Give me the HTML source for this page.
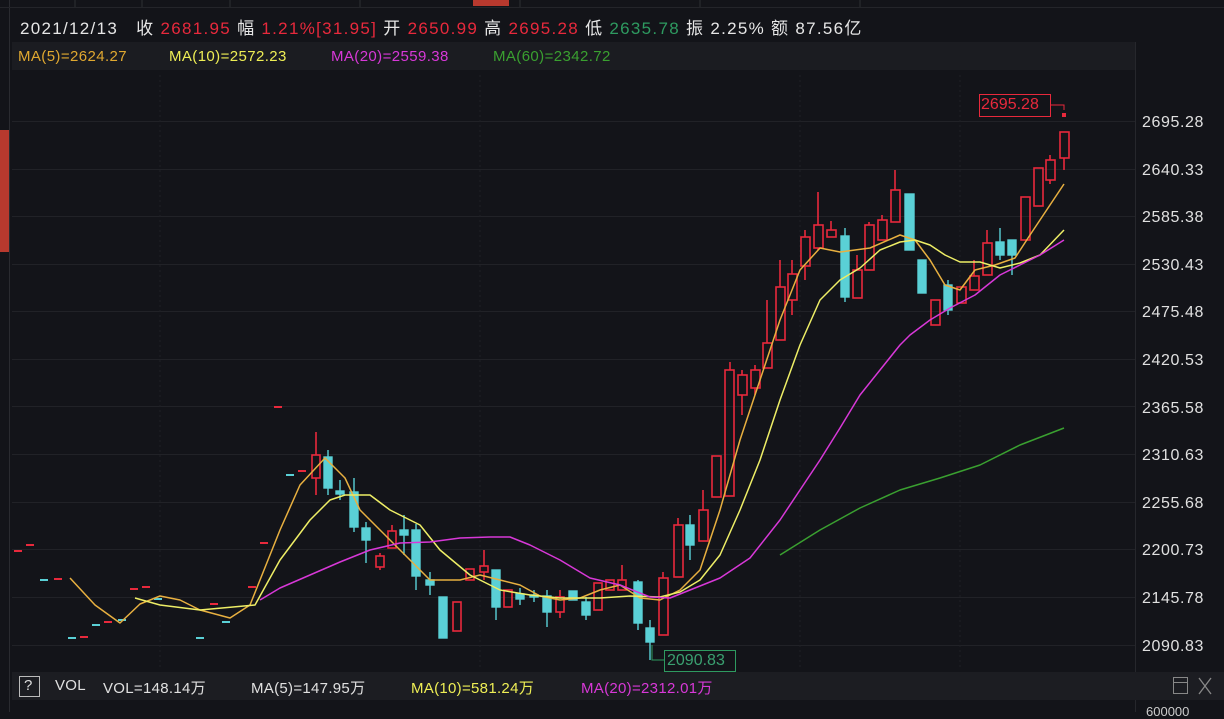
<!DOCTYPE html>
<html><head><meta charset="utf-8"><style>
html,body{margin:0;padding:0;background:#131419;width:1224px;height:712px;overflow:hidden;font-family:"Liberation Sans","Noto Sans CJK SC",sans-serif}
.t{position:absolute;white-space:nowrap}
.m{position:absolute;white-space:nowrap;top:48px;font-size:15px;letter-spacing:0.4px}
.v{position:absolute;white-space:nowrap;top:677px;font-size:15px;letter-spacing:0.3px;color:#e0e0e0}
</style></head><body>
<svg width="1224" height="712" style="position:absolute;left:0;top:0">
<rect x="0" y="0" width="1224" height="712" fill="#131419"/>
<line x1="9.5" y1="0" x2="9.5" y2="712" stroke="#2a2b30"/>
<rect x="0" y="130" width="9" height="122" fill="#b8392e"/>
<line x1="0" y1="7.5" x2="1224" y2="7.5" stroke="#24252a"/>
<g stroke="#2e2f34"><line x1="75" y1="0" x2="75" y2="7"/><line x1="142" y1="0" x2="142" y2="7"/><line x1="230" y1="0" x2="230" y2="7"/><line x1="360" y1="0" x2="360" y2="7"/><line x1="520" y1="0" x2="520" y2="7"/><line x1="700" y1="0" x2="700" y2="7"/><line x1="860" y1="0" x2="860" y2="7"/></g>
<rect x="473" y="0" width="36" height="6" fill="#b8392e"/>
<rect x="12" y="42" width="1123" height="28" fill="#1b1c21"/>
<line x1="1135.5" y1="42" x2="1135.5" y2="712" stroke="#26272c"/>
<g stroke="#212227" stroke-width="1">
<line x1="12" y1="121.5" x2="1135" y2="121.5"/><line x1="12" y1="169.5" x2="1135" y2="169.5"/><line x1="12" y1="216.5" x2="1135" y2="216.5"/><line x1="12" y1="264.5" x2="1135" y2="264.5"/><line x1="12" y1="311.5" x2="1135" y2="311.5"/><line x1="12" y1="359.5" x2="1135" y2="359.5"/><line x1="12" y1="406.5" x2="1135" y2="406.5"/><line x1="12" y1="454.5" x2="1135" y2="454.5"/><line x1="12" y1="502.5" x2="1135" y2="502.5"/><line x1="12" y1="549.5" x2="1135" y2="549.5"/><line x1="12" y1="597.5" x2="1135" y2="597.5"/><line x1="12" y1="645.5" x2="1135" y2="645.5"/>
</g>
<g stroke="#1f2025" stroke-dasharray="2,3"><line x1="160" y1="75" x2="160" y2="668"/><line x1="480" y1="75" x2="480" y2="668"/><line x1="800" y1="75" x2="800" y2="668"/><line x1="960" y1="75" x2="960" y2="668"/></g>
<g stroke-width="2">
<line x1="14" y1="551" x2="22" y2="551" stroke="#e8293c"/><line x1="26" y1="545" x2="34" y2="545" stroke="#e8293c"/>
<line x1="40" y1="580" x2="48" y2="580" stroke="#5ad0d6"/><line x1="54" y1="579" x2="62" y2="579" stroke="#e8293c"/>
<line x1="68" y1="638" x2="76" y2="638" stroke="#5ad0d6"/><line x1="80" y1="637" x2="88" y2="637" stroke="#e8293c"/>
<line x1="92" y1="625" x2="100" y2="625" stroke="#5ad0d6"/><line x1="104" y1="622" x2="112" y2="622" stroke="#e8293c"/>
<line x1="118" y1="620" x2="126" y2="620" stroke="#5ad0d6"/><line x1="130" y1="589" x2="138" y2="589" stroke="#e8293c"/>
<line x1="142" y1="587" x2="150" y2="587" stroke="#e8293c"/><line x1="154" y1="599" x2="162" y2="599" stroke="#5ad0d6"/>
<line x1="196" y1="638" x2="204" y2="638" stroke="#5ad0d6"/><line x1="210" y1="604" x2="218" y2="604" stroke="#e8293c"/>
<line x1="222" y1="622" x2="230" y2="622" stroke="#5ad0d6"/><line x1="248" y1="587" x2="256" y2="587" stroke="#e8293c"/>
<line x1="260" y1="543" x2="268" y2="543" stroke="#e8293c"/><line x1="274" y1="407" x2="282" y2="407" stroke="#e8293c"/>
<line x1="286" y1="475" x2="294" y2="475" stroke="#5ad0d6"/><line x1="298" y1="471" x2="306" y2="471" stroke="#e8293c"/>
</g>
<g stroke="#e8293c" stroke-width="1.6" fill="none">
<path d="M316 432V455M316 478V495"/><rect x="312" y="455" width="8" height="23"/>
<path d="M380 553V556M380 567V570"/><rect x="376" y="556" width="8" height="11"/>
<path d="M392 525V531"/><rect x="388" y="531" width="8" height="17"/>
<rect x="453" y="602" width="8" height="29"/>
<rect x="466" y="569" width="8" height="11"/>
<path d="M484 550V566M484 572V580"/><rect x="480" y="566" width="8" height="6"/>
<rect x="504" y="590" width="8" height="17"/>
<path d="M560 590V597M560 612V618"/><rect x="556" y="597" width="8" height="15"/>
<rect x="594" y="583" width="8" height="27"/>
<rect x="606" y="580" width="8" height="10"/>
<path d="M622 565V580"/><rect x="618" y="580" width="8" height="10"/>
<path d="M663 572V578"/><rect x="659" y="578" width="9" height="57"/>
<path d="M678 518V525"/><rect x="674" y="525" width="9" height="52"/>
<path d="M703 490V510"/><rect x="699" y="510" width="9" height="31"/>
<rect x="712" y="456" width="9" height="41"/>
<path d="M730 362V370"/><rect x="725" y="370" width="9" height="126"/>
<path d="M742 370V375M742 395V415"/><rect x="738" y="375" width="9" height="20"/>
<path d="M755 365V370M755 388V395"/><rect x="751" y="370" width="9" height="18"/>
<path d="M767 300V343"/><rect x="763" y="343" width="9" height="25"/>
<path d="M780 260V287"/><rect x="776" y="287" width="9" height="53"/>
<path d="M792 260V274M792 300V315"/><rect x="788" y="274" width="9" height="26"/>
<path d="M805 230V237M805 266V280"/><rect x="801" y="237" width="9" height="29"/>
<path d="M818 192V225M818 248V250"/><rect x="814" y="225" width="9" height="23"/>
<path d="M831 221V230"/><rect x="827" y="230" width="9" height="7"/>
<path d="M857 255V270"/><rect x="853" y="270" width="9" height="28"/>
<path d="M869 222V225"/><rect x="865" y="225" width="9" height="45"/>
<path d="M882 215V220"/><rect x="878" y="220" width="9" height="20"/>
<path d="M895 170V190"/><rect x="891" y="190" width="9" height="32"/>
<rect x="931" y="300" width="9" height="25"/>
<rect x="957" y="287" width="9" height="16"/>
<path d="M974 260V276"/><rect x="970" y="276" width="9" height="14"/>
<path d="M987 230V243"/><rect x="983" y="243" width="9" height="32"/>
<rect x="1021" y="197" width="9" height="43"/>
<rect x="1034" y="168" width="9" height="38"/>
<path d="M1050 155V160M1050 180V184"/><rect x="1046" y="160" width="9" height="20"/>
<path d="M1064 170V158"/><rect x="1060" y="132" width="9" height="26"/>
</g>
<g fill="#5ad0d6" stroke="#5ad0d6" stroke-width="1.4">
<path d="M328 450V495"/><rect x="324" y="457" width="8" height="31"/>
<path d="M340 480V500"/><rect x="336" y="491" width="8" height="3"/>
<path d="M354 478V532"/><rect x="350" y="492" width="8" height="35"/>
<path d="M366 522V563"/><rect x="362" y="528" width="8" height="12"/>
<path d="M404 515V555"/><rect x="400" y="530" width="8" height="5"/>
<path d="M416 524V590"/><rect x="412" y="530" width="8" height="46"/>
<path d="M430 572V595"/><rect x="426" y="580" width="8" height="5"/>
<rect x="439" y="597" width="8" height="41"/>
<path d="M496 570V620"/><rect x="492" y="570" width="8" height="37"/>
<path d="M520 588V605"/><rect x="516" y="594" width="8" height="5"/>
<path d="M534 590V602"/><rect x="530" y="595" width="8" height="2"/>
<path d="M547 590V627"/><rect x="543" y="596" width="8" height="16"/>
<rect x="569" y="591" width="8" height="9"/>
<path d="M586 597V620"/><rect x="582" y="602" width="8" height="13"/>
<path d="M638 580V630"/><rect x="634" y="582" width="8" height="41"/>
<path d="M650 620V660"/><rect x="646" y="628" width="8" height="14"/>
<path d="M690 515V560"/><rect x="686" y="525" width="8" height="20"/>
<path d="M845 228V302"/><rect x="841" y="236" width="8" height="61"/>
<rect x="905" y="194" width="9" height="56"/>
<rect x="918" y="260" width="8" height="33"/>
<path d="M948 280V315"/><rect x="944" y="285" width="8" height="25"/>
<path d="M1000 228V260"/><rect x="996" y="242" width="8" height="13"/>
<path d="M1012 240V275"/><rect x="1008" y="240" width="8" height="15"/>
</g>
<g fill="none" stroke-width="1.5" stroke-linejoin="round">
<polyline stroke="#e8b040" points="70,578 95,605 120,623 140,604 160,596 180,600 200,610 230,618 250,605 280,530 300,485 325,458 345,478 360,510 380,530 410,560 430,580 460,580 480,575 500,580 520,585 540,596 560,600 580,598 600,590 620,585 640,598 660,600 680,590 700,570 720,510 740,440 760,380 780,320 800,270 820,248 840,252 870,248 900,235 915,240 930,260 945,285 960,290 975,270 995,265 1015,258 1030,235 1050,205 1064,184"/>
<polyline stroke="#eeee66" points="135,598 160,605 200,610 255,605 280,560 310,520 330,500 345,495 370,495 390,510 420,525 440,550 470,575 500,590 530,595 560,598 600,598 630,596 660,597 680,592 700,580 720,555 740,510 760,460 780,400 800,345 820,300 840,280 860,268 880,250 900,242 915,240 930,245 945,255 960,262 980,262 1000,268 1020,263 1040,255 1064,230"/>
<polyline stroke="#d838d8" points="260,600 280,588 310,575 340,562 370,550 400,543 430,542 460,538 490,537 510,537 530,545 560,560 590,578 620,585 650,597 670,598 690,590 720,578 750,558 780,520 800,490 820,460 840,428 860,395 880,370 900,345 910,335 930,320 950,308 975,295 1000,275 1020,265 1040,255 1064,240"/>
<polyline stroke="#3aa030" points="780,555 820,530 860,508 900,490 940,478 980,465 1020,445 1064,428"/>
</g>
<rect x="979.5" y="94.5" width="71" height="22" fill="none" stroke="#e8293c"/>
<polyline points="1050,105 1064,105 1064,110" fill="none" stroke="#e8293c"/>
<rect x="1062" y="113" width="4" height="4" fill="#e8293c"/>
<rect x="664.5" y="650.5" width="71" height="21" fill="none" stroke="#2e9a60"/>
<polyline points="652,645 652,660 664,660" fill="none" stroke="#2e9a60"/>
<rect x="12" y="672" width="1212" height="28" fill="#1c1d22"/>
<rect x="19.5" y="676.5" width="20" height="20" fill="none" stroke="#bbb"/>
<rect x="1173.5" y="677.5" width="14" height="16" fill="none" stroke="#888"/>
<line x1="1174" y1="682.5" x2="1187" y2="682.5" stroke="#888"/>
<path d="M1199 678L1211 694M1211 678L1199 694" stroke="#888" stroke-width="1.3"/>
</svg>
<div class="t" style="left:20px;top:14px;font-size:17px;letter-spacing:1.3px;color:#e6e6e6">2021/12/13&nbsp;&nbsp; 收 <span style="color:#e8293c">2681.95</span> 幅 <span style="color:#e8293c">1.21%[31.95]</span> 开 <span style="color:#e8293c">2650.99</span> 高 <span style="color:#e8293c">2695.28</span> 低 <span style="color:#2e9a60">2635.78</span> 振 2.25% 额 87.56亿</div>
<div class="m" style="left:18px;color:#e0a830">MA(5)=2624.27</div>
<div class="m" style="left:169px;color:#eeee55">MA(10)=2572.23</div>
<div class="m" style="left:331px;color:#d838d8">MA(20)=2559.38</div>
<div class="m" style="left:493px;color:#3aa030">MA(60)=2342.72</div>
<div class="t" style="left:981px;top:96px;font-size:16px;color:#e8293c">2695.28</div>
<div class="t" style="left:667px;top:652px;font-size:16px;color:#3aa070">2090.83</div>
<div class="t" style="left:24px;top:677px;font-size:15px;color:#ddd">?</div>
<div class="v" style="left:55px">VOL</div>
<div class="v" style="left:103px">VOL=148.14万</div>
<div class="v" style="left:251px">MA(5)=147.95万</div>
<div class="v" style="left:411px;color:#eeee55">MA(10)=581.24万</div>
<div class="v" style="left:581px;color:#d838d8">MA(20)=2312.01万</div>
<div style="position:absolute;left:1142px;top:99px;font-size:16px;letter-spacing:0.6px;color:#e0e0e0;line-height:47.6px">2695.28<br>2640.33<br>2585.38<br>2530.43<br>2475.48<br>2420.53<br>2365.58<br>2310.63<br>2255.68<br>2200.73<br>2145.78<br>2090.83</div>
<div class="t" style="left:1146px;top:704px;font-size:13px;color:#ccc">600000</div>
</body></html>
